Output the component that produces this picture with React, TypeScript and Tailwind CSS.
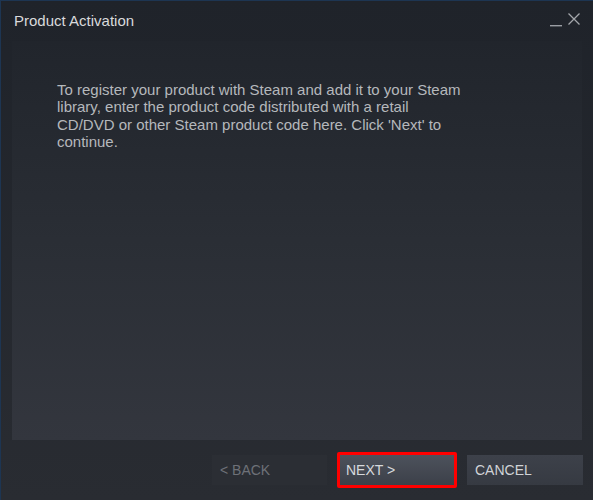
import React from "react";

export default function App() {
  return (
    <div
      className="w-[593px] h-[500px] flex flex-col border-l border-t border-[#1d3552] bg-gradient-to-b from-[#1f232a] to-[#292c32] overflow-hidden"
      style={{ fontFamily: "Arial, 'Liberation Sans', sans-serif" }}
    >
      <div className="h-[40px] flex items-start justify-between pl-[13px] pr-[12px] pt-[11px]">
        <span className="text-[15px] text-[#d9dadc] leading-[18px]">Product Activation</span>
        <div className="flex items-start gap-[4px] pt-[0px]">
          <svg width="14" height="16" viewBox="0 0 14 16">
            <rect x="1" y="13" width="12" height="1.4" fill="#9a9da3" />
          </svg>
          <svg width="14" height="14" viewBox="0 0 14 14">
            <path d="M1.5 1.5 L12.5 12.5 M12.5 1.5 L1.5 12.5" stroke="#a3a6ab" strokeWidth="1.3" />
          </svg>
        </div>
      </div>
      <div className="mx-[11px] h-[399px] bg-gradient-to-b from-[#21252c] via-[#2a2e35] to-[#33363e] pl-[45px] pr-[20px] pt-[40px]">
        <p className="text-[15px] leading-[17.3px] text-[#b5b8bc] w-[409px]">
          To register your product with Steam and add it to your Steam library, enter the product code distributed with a retail CD/DVD or other Steam product code here. Click 'Next' to continue.
        </p>
      </div>
      <div className="flex justify-end items-center pr-[10px] pt-[12px] gap-[10px]">
        <button className="w-[115px] h-[30px] bg-[#2b2e34] text-left pl-[8px] text-[14px] text-[#6e7178]">
          &lt; BACK
        </button>
        <div className="border-[3px] border-[#ff0000] rounded-[2px]">
          <button className="w-[114px] h-[30px] bg-gradient-to-b from-[#4d525c] to-[#3c4049] text-left pl-[6px] text-[14px] text-[#d6d9dd] block">
            NEXT &gt;
          </button>
        </div>
        <button className="w-[116px] h-[30px] bg-gradient-to-b from-[#3d414a] to-[#363a42] text-left pl-[8px] text-[14px] text-[#d0d3d7]">
          CANCEL
        </button>
      </div>
    </div>
  );
}
